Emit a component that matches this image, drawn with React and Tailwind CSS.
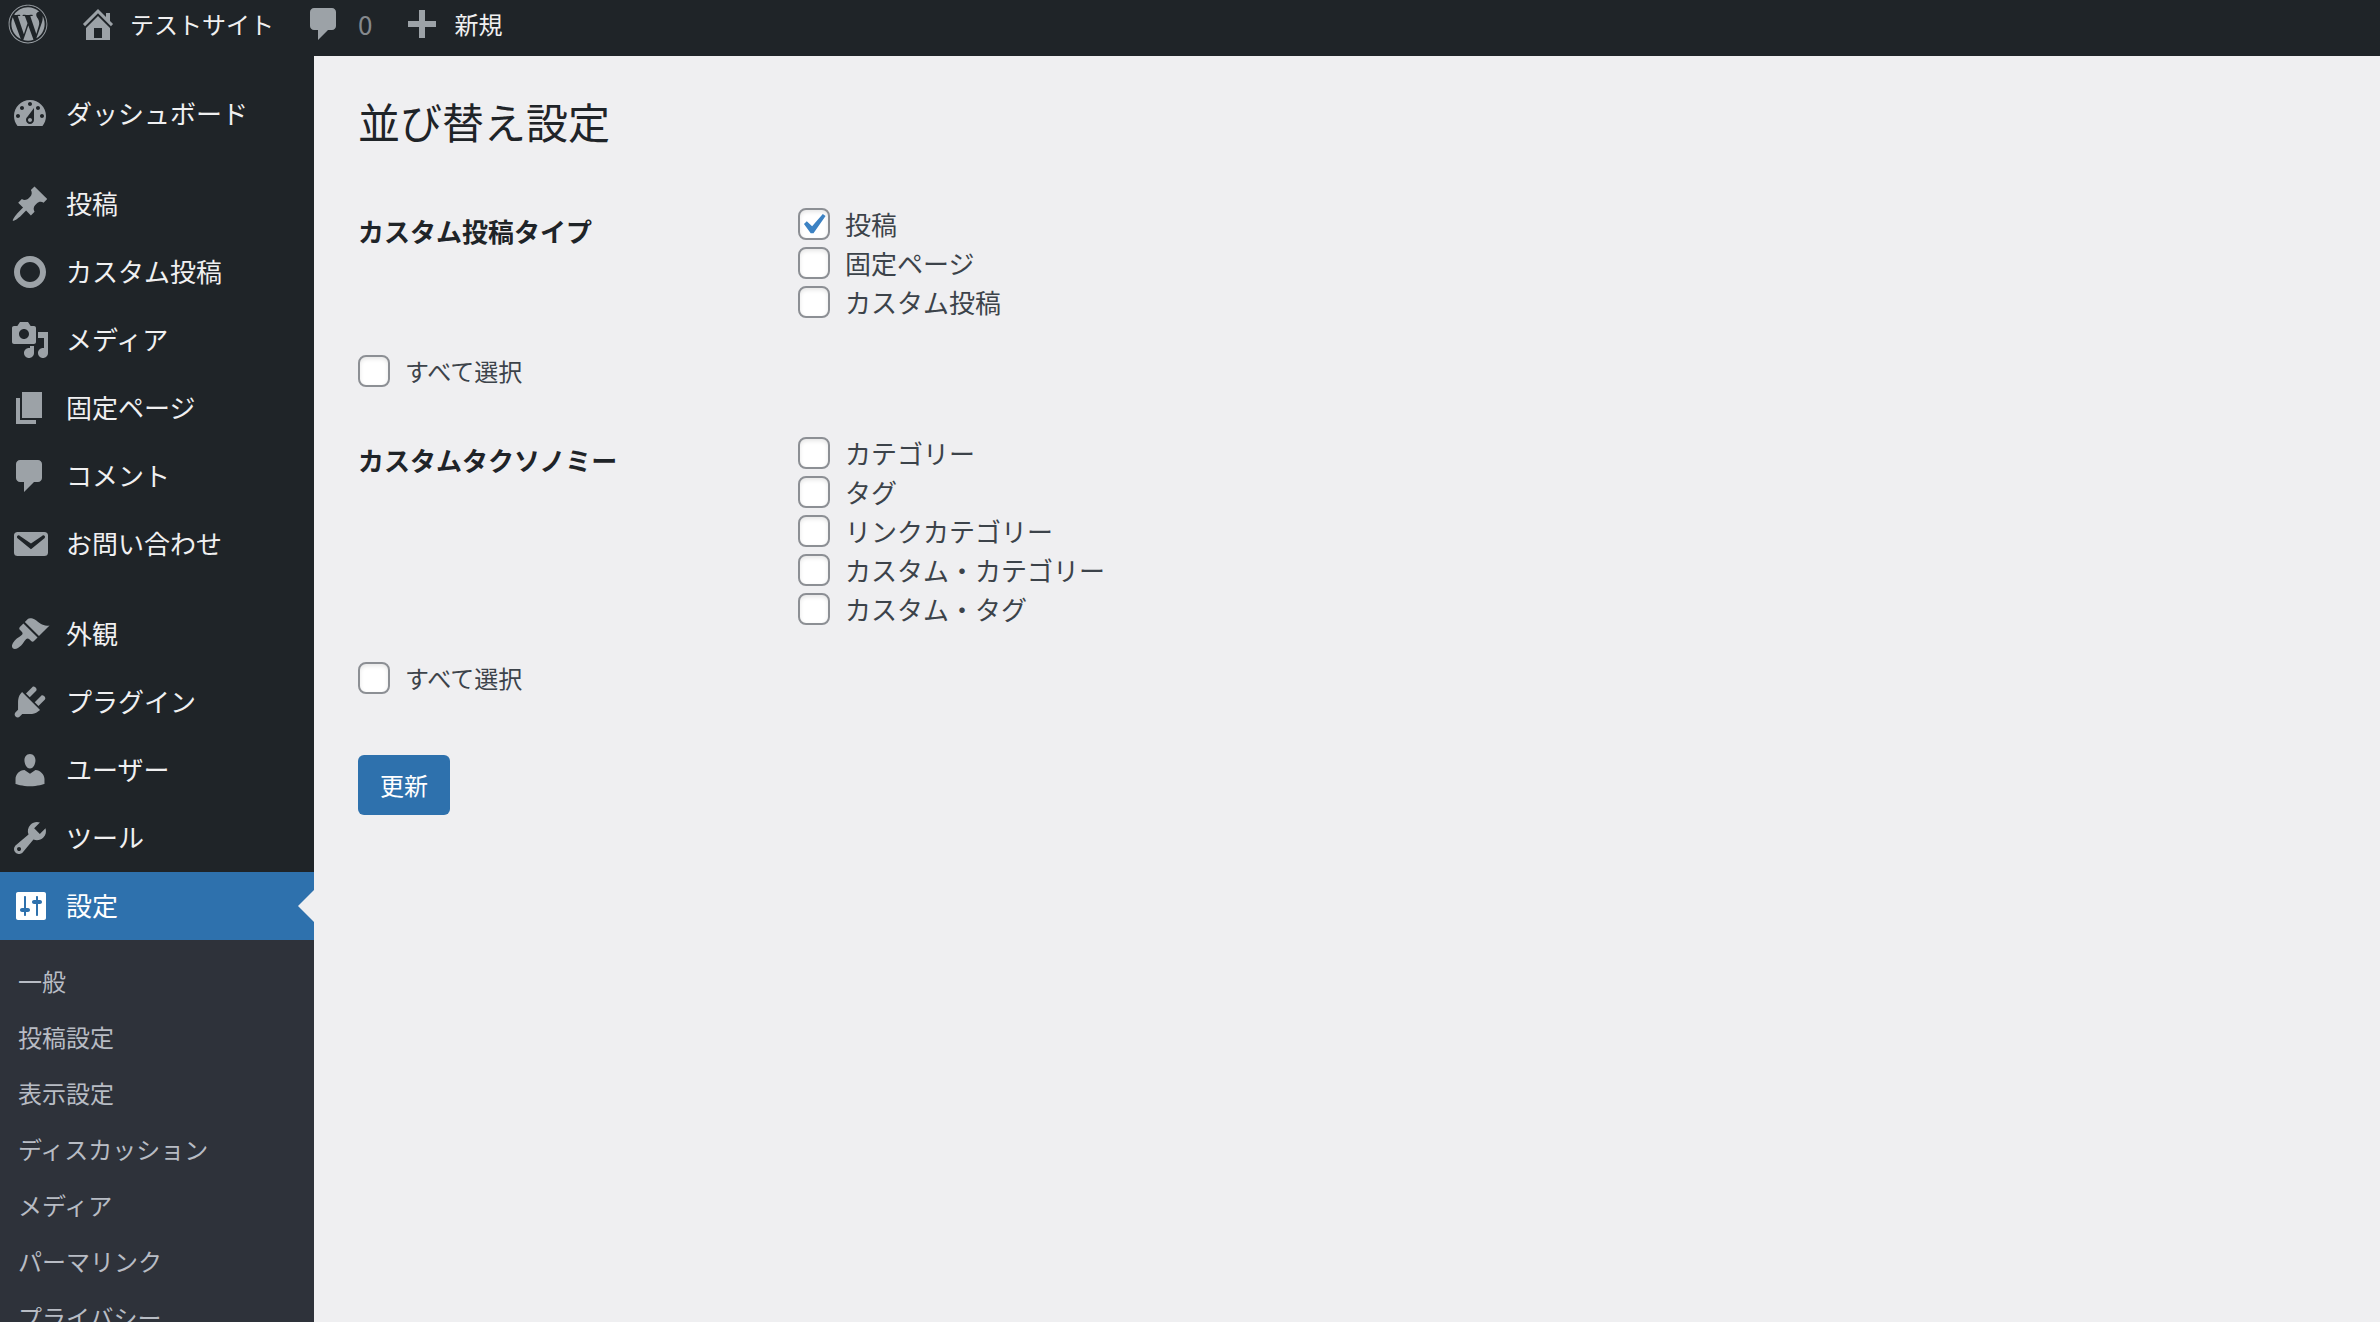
import React, { useState } from "react";
import { FaWordpress } from "react-icons/fa";

const PATHS = {
  home: "M16 8.5l1.53 1.53-1.06 1.06L10 4.6l-6.47 6.49-1.06-1.06L10 2.5l4 4v-2h2v4zm-6-2.46l6 5.99V18H4v-5.97zM12 17v-5H8v5h4z",
  plus: "M17 8.5v3h-5.5V17h-3v-5.5H3v-3h5.5V3h3v5.5H17z",
  dashboard:
    "M3.76 16h12.48c1.1-1.37 1.76-3.11 1.76-5 0-4.42-3.58-8-8-8s-8 3.58-8 8c0 1.89.66 3.63 1.76 5zM10 4c.55 0 1 .45 1 1s-.45 1-1 1-1-.45-1-1 .45-1 1-1zM6 6c.55 0 1 .45 1 1s-.45 1-1 1-1-.45-1-1 .45-1 1-1zm8 0c.55 0 1 .45 1 1s-.45 1-1 1-1-.45-1-1 .45-1 1-1zm-5.37 5.55L12 7v6c0 1.1-.9 2-2 2s-2-.9-2-2c0-.57.24-1.08.63-1.45zM4 10c.55 0 1 .45 1 1s-.45 1-1 1-1-.45-1-1 .45-1 1-1zm12 0c.55 0 1 .45 1 1s-.45 1-1 1-1-.45-1-1 .45-1 1-1zm-5 3c0-.55-.45-1-1-1s-1 .45-1 1 .45 1 1 1 1-.45 1-1z",
  post: "M10.44 3.02l1.82-1.82 6.36 6.35-1.83 1.82c-1.05-.68-2.48-.57-3.41.36l-.75.75c-.92.93-1.04 2.35-.35 3.41l-1.83 1.82-2.41-2.41-2.8 2.79c-.42.42-3.38 2.71-3.8 2.29s1.86-3.39 2.28-3.81l2.79-2.79L4.1 9.36l1.83-1.82c1.05.69 2.48.57 3.4-.36l.75-.75c.93-.92 1.05-2.35.36-3.41z",
  marker:
    "M10 2c4.42 0 8 3.58 8 8s-3.58 8-8 8-8-3.58-8-8 3.58-8 8-8zm0 13c2.76 0 5-2.24 5-5s-2.24-5-5-5-5 2.24-5 5 2.24 5 5 5z",
  media:
    "M13 11V4c0-.55-.45-1-1-1h-1.67L9 1H5L3.67 3H2c-.55 0-1 .45-1 1v7c0 .55.45 1 1 1h10c.55 0 1-.45 1-1zM7 4.5c1.38 0 2.5 1.12 2.5 2.5S8.38 9.5 7 9.5 4.5 8.38 4.5 7 5.62 4.5 7 4.5zM14 6h5v10.5c0 1.38-1.12 2.5-2.5 2.5S14 17.88 14 16.5s1.12-2.5 2.5-2.5c.17 0 .34.02.5.05V9h-3V6zm-4 8.05V13h2v3.5c0 1.38-1.12 2.5-2.5 2.5S7 17.88 7 16.5 8.12 14 9.5 14c.17 0 .34.02.5.05z",
  page: "M6 15V2h10v13H6zm-1 1h8v2H3V5h2v11z",
  comment:
    "M5 2h9q.82 0 1.41.59T16 4v7q0 .82-.59 1.41T14 13h-2l-5 5v-5H5q-.82 0-1.41-.59T3 11V4q0-.82.59-1.41T5 2z",
  email:
    "M3.87 4h13.25C18.37 4 19 4.59 19 5.79v8.42c0 1.19-.63 1.79-1.88 1.79H3.87c-1.25 0-1.88-.6-1.88-1.79V5.79c0-1.2.63-1.79 1.88-1.79zm6.62 8.6l6.74-5.53c.24-.2.43-.66.13-1.07-.29-.41-.82-.42-1.17-.17l-5.7 3.86L4.8 5.83c-.35-.25-.88-.24-1.17.17-.3.41-.11.87.13 1.07z",
  appearance:
    "M14.48 11.06L7.41 3.99l1.5-1.5c.5-.56 2.3-.47 3.51.32 1.21.8 1.43 1.28 2.91 2.1 1.18.64 2.45 1.26 4.45.85zm-.71.71L6.7 4.7 4.93 6.47c-.39.39-.39 1.02 0 1.41l1.06 1.06c.39.39.39 1.03 0 1.42-.6.6-1.43 1.11-2.21 1.69-.35.26-.7.53-1.01.84C1.43 14.23.4 16.08 1.4 17.07c.99 1 2.84-.03 4.18-1.36.31-.31.58-.66.85-1.02.57-.78 1.08-1.61 1.69-2.21.39-.39 1.02-.39 1.41 0l1.06 1.06c.39.39 1.02.39 1.41 0z",
  plugins:
    "M13.11 4.36L9.87 7.6 8 5.73l3.24-3.24c.35-.34 1.05-.2 1.56.32.52.51.66 1.21.31 1.55zm-8 1.77l.91-1.12 9.01 9.01-1.19.84c-.71.71-2.63 1.16-3.82 1.16H6.14L4.9 17.26c-.59.59-1.54.59-2.12 0-.59-.58-.59-1.53 0-2.12l1.24-1.24v-3.88c0-1.13.4-3.19 1.09-3.89zm7.26 3.97l3.24-3.24c.34-.35 1.04-.21 1.55.31.52.51.66 1.21.31 1.55l-3.24 3.25z",
  users:
    "M10 9.25c-2.27 0-2.73-3.44-2.73-3.44C7 4.02 7.82 2 9.97 2c2.16 0 2.98 2.02 2.71 3.81 0 0-.41 3.44-2.68 3.44zm0 2.57L12.72 10c2.39 0 4.52 2.33 4.52 4.53v2.49s-3.65 1.13-7.24 1.13c-3.65 0-7.24-1.13-7.24-1.13v-2.49c0-2.25 1.94-4.48 4.47-4.48z",
  tools:
    "M16.68 9.77c-1.34 1.34-3.3 1.67-4.95.99l-5.41 6.52c-.99.99-2.59.99-3.58 0s-.99-2.59 0-3.57l6.52-5.42c-.68-1.65-.35-3.61.99-4.95 1.28-1.28 3.12-1.62 4.72-1.06l-2.89 2.89 2.82 2.82 2.86-2.87c.53 1.58.18 3.39-1.08 4.65zM3.81 16.21c.4.39 1.04.39 1.43 0 .4-.4.4-1.04 0-1.43-.39-.4-1.03-.4-1.43 0-.39.39-.39 1.03 0 1.43z",
  settings:
    "M18 16V4c0-.55-.45-1-1-1H4c-.55 0-1 .45-1 1v12c0 .55.45 1 1 1h13c.55 0 1-.45 1-1zM8 11h1c.55 0 1 .45 1 1s-.45 1-1 1H8v1.5c0 .28-.22.5-.5.5s-.5-.22-.5-.5V13H6c-.55 0-1-.45-1-1s.45-1 1-1h1V5.5c0-.28.22-.5.5-.5s.5.22.5.5V11zm5-2h-1c-.55 0-1-.45-1-1s.45-1 1-1h1V5.5c0-.28.22-.5.5-.5s.5.22.5.5V7h1c.55 0 1 .45 1 1s-.45 1-1 1h-1v5.5c0 .28-.22.5-.5.5s-.5-.22-.5-.5V9z",
};

function Icon({ name, className = "" }) {
  return (
    <svg
      viewBox="0 0 20 20"
      fill="currentColor"
      fillRule={name === "home" || name === "dashboard" ? "evenodd" : "nonzero"}
      aria-hidden="true"
      className={`size-10 shrink-0 ${className}`}
    >
      <path d={PATHS[name]} />
    </svg>
  );
}

const MENU = [
  [["dashboard", "ダッシュボード"]],
  [
    ["post", "投稿"],
    ["marker", "カスタム投稿"],
    ["media", "メディア"],
    ["page", "固定ページ"],
    ["comment", "コメント"],
    ["email", "お問い合わせ"],
  ],
  [
    ["appearance", "外観"],
    ["plugins", "プラグイン"],
    ["users", "ユーザー"],
    ["tools", "ツール"],
    ["settings", "設定"],
  ],
];

const SUBMENU = [
  "一般",
  "投稿設定",
  "表示設定",
  "ディスカッション",
  "メディア",
  "パーマリンク",
  "プライバシー",
];

function AdminBar() {
  return (
    <header className="flex h-14 shrink-0 items-center bg-[#1f2428] pb-2 pl-2 text-2xl text-[#f0f0f1]">
      <a href="#wordpress" aria-label="WordPress" className="text-[#9ca2a7]">
        <FaWordpress className="size-10" />
      </a>
      <a href="#site" className="ml-[30px] flex items-center gap-3">
        <Icon name="home" className="text-[#9ca2a7]" />
        テストサイト
      </a>
      <a href="#comments" className="ml-[30px] flex items-center gap-3.5 text-[26px] text-[#85898d]">
        <Icon name="comment" className="text-[#9ca2a7]" />
        0
      </a>
      <a href="#new" className="ml-[30px] flex items-center gap-3">
        <Icon name="plus" className="text-[#9ca2a7]" />
        新規
      </a>
    </header>
  );
}

function Sidebar() {
  return (
    <nav className="flex w-[314px] shrink-0 flex-col bg-[#1f2428] pt-6">
      <div className="flex flex-col gap-[22px]">
        {MENU.map((group) => (
          <ul key={group[0][0]}>
            {group.map(([icon, label]) => {
              const active = icon === "settings";
              return (
                <li key={icon}>
                  <a
                    href={`#${icon}`}
                    className={`relative flex h-[68px] items-center gap-4 pl-2.5 text-[26px] ${
                      active ? "bg-[#2e71ad] text-white" : "text-[#f0f0f1]"
                    }`}
                  >
                    <Icon name={icon} className={active ? "text-white" : "text-[#9ca2a7]"} />
                    <span className="pb-1">{label}</span>
                    {active && (
                      <span className="absolute top-[18px] right-0 border-y-16 border-r-16 border-y-transparent border-r-[#efeff1]" />
                    )}
                  </a>
                </li>
              );
            })}
          </ul>
        ))}
      </div>
      <ul className="grow bg-[#2e323a] pt-[13px]">
        {SUBMENU.map((label) => (
          <li key={label}>
            <a href={`#${label}`} className="flex h-14 items-center pl-[18px] text-2xl text-[#b8bcc4]">
              {label}
            </a>
          </li>
        ))}
      </ul>
    </nav>
  );
}

function Check({ checked, onChange, children, className }) {
  return (
    <label className={`flex w-fit items-center gap-[15px] text-[#3c434a] ${className}`}>
      <span className="grid size-8 shrink-0">
        <input
          type="checkbox"
          checked={checked}
          onChange={onChange}
          className="peer col-start-1 row-start-1 size-8 appearance-none rounded-lg border-2 border-[#8c8f94] bg-white shadow-[inset_0_2px_4px_rgba(0,0,0,0.1)]"
        />
        <svg
          viewBox="2.9 2 15.4 15.4"
          fill="#3c82c3"
          aria-hidden="true"
          className="pointer-events-none invisible col-start-1 row-start-1 size-8 peer-checked:visible"
        >
          <path d="M14.83 4.89l1.34.94-5.81 8.38H9.02L5.78 9.67l1.34-1.25 2.57 2.4z" />
        </svg>
      </span>
      <span>{children}</span>
    </label>
  );
}

function CheckGroup({ title, options, initial = [] }) {
  const [picked, setPicked] = useState(initial);
  const all = picked.length === options.length;
  const toggle = (name) =>
    setPicked(picked.includes(name) ? picked.filter((n) => n !== name) : [...picked, name]);
  return (
    <section>
      <table className="w-full table-fixed text-left">
        <tbody>
          <tr>
            <th scope="row" className="w-[440px] pt-[9px] align-top text-[26px] leading-9 font-bold text-[#1f2428]">
              {title}
            </th>
            <td className="align-top">
              {options.map((name) => (
                <Check
                  key={name}
                  checked={picked.includes(name)}
                  onChange={() => toggle(name)}
                  className="h-[39px] text-[26px]"
                >
                  {name}
                </Check>
              ))}
            </td>
          </tr>
        </tbody>
      </table>
      <Check
        checked={all}
        onChange={() => setPicked(all ? [] : options)}
        className="mt-[30px] h-10 text-2xl"
      >
        すべて選択
      </Check>
    </section>
  );
}

export default function App() {
  return (
    <div
      lang="ja"
      className="flex h-screen flex-col overflow-hidden bg-[#efeff1] font-['Noto_Sans_CJK_JP',sans-serif]"
    >
      <AdminBar />
      <div className="flex min-h-0 grow">
        <Sidebar />
        <main className="grow px-11 pt-[35px]">
          <h1 className="text-[42px] leading-[60px] text-[#1f2428]">並び替え設定</h1>
          <form className="mt-[53px]" onSubmit={(e) => e.preventDefault()}>
            <div className="flex flex-col gap-[42px]">
              <CheckGroup
                title="カスタム投稿タイプ"
                options={["投稿", "固定ページ", "カスタム投稿"]}
                initial={["投稿"]}
              />
              <CheckGroup
                title="カスタムタクソノミー"
                options={["カテゴリー", "タグ", "リンクカテゴリー", "カスタム・カテゴリー", "カスタム・タグ"]}
              />
            </div>
            <button
              type="submit"
              className="mt-[57px] flex h-[60px] items-center rounded-md bg-[#2e71ad] px-[22px] text-2xl text-white"
            >
              更新
            </button>
          </form>
        </main>
      </div>
    </div>
  );
}
